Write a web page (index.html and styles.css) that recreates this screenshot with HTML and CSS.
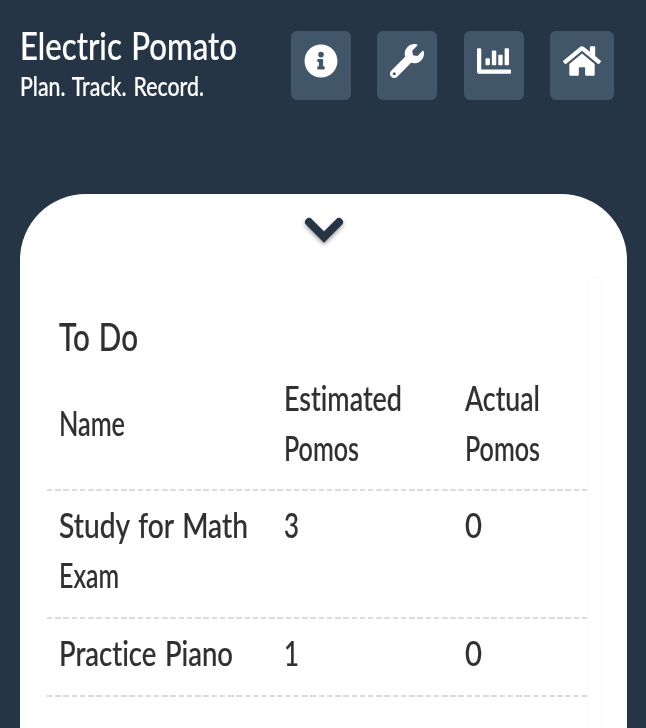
FILE: index.html
```html
<!DOCTYPE html>
<html lang="en">
<head>
<meta charset="utf-8">
<title>Electric Pomato</title>
<link rel="stylesheet" href="styles.css">
</head>
<body>
<header class="header">
  <div class="brand">
    <h1 class="title"><span class="fit" data-width="217">Electric Pomato</span></h1>
    <p class="tagline"><span class="fit" data-width="184">Plan. Track. Record.</span></p>
  </div>
  <nav class="nav">
    <button class="nav-button" aria-label="Information">
      <svg class="icon" width="34" height="34" viewBox="0 0 512 512"><path d="M256 8C119 8 8 119 8 256s111 248 248 248 248-111 248-248S393 8 256 8zm0 110a42 42 0 1 1 0 84 42 42 0 0 1 0-84zm56 254c0 6.600-5.400 12-12 12h-88c-6.600 0-12-5.400-12-12v-24c0-6.600 5.400-12 12-12h12v-64h-12c-6.600 0-12-5.400-12-12v-24c0-6.600 5.400-12 12-12h64c6.600 0 12 5.400 12 12v100h12c6.600 0 12 5.400 12 12v24z"/></svg>
    </button>
    <button class="nav-button" aria-label="Settings">
      <svg class="icon" width="34" height="34" viewBox="0 0 512 512"><path d="M508.700 110c-2.400-9.200-13.800-11.900-20.500-5.200L413.800 179.200l-67.900-11.300-11.300-67.900 74.400-74.400c6.700-6.700 3.900-18.100-5.300-20.500C355.500-7.300 302.200 5.500 264.400 43.300c-40.500 40.500-52.200 98.900-36.500 150.200L18.700 402.700c-25 25-25 65.500 0 90.500s65.500 25 90.500 0l209.100-209c51.200 15.900 109.500 4.400 150.400-36.500 37.900-37.900 50.500-91.200 40-137.700zM64 472a24 24 0 1 1 0-48 24 24 0 0 1 0 48z"/></svg>
    </button>
    <button class="nav-button" aria-label="Statistics">
      <svg class="icon" width="34" height="34" viewBox="0 0 512 512"><path d="M16 64h32c9 0 16 7 16 16v304h432c9 0 16 7 16 16v32c0 9-7 16-16 16H32c-18 0-32-14-32-32V80c0-9 7-16 16-16z"/><rect x="128" y="216" width="66" height="104" rx="14"/><rect x="224" y="96" width="66" height="224" rx="14"/><rect x="320" y="160" width="66" height="160" rx="14"/><rect x="416" y="64" width="66" height="256" rx="14"/></svg>
    </button>
    <button class="nav-button wide" aria-label="Home">
      <svg class="icon" width="38" height="34" viewBox="0 0 576 512"><path d="M280 148 96 300v164c0 9 7 16 16 16h112c9 0 16-7 16-16v-96c0-9 7-16 16-16h64c9 0 16 7 16 16v96c0 9 7 16 16 16h112c9 0 16-7 16-16V300L296 148c-5-4-11-4-16 0zM572 251l-84-69V44c0-7-5-12-12-12h-56c-7 0-12 5-12 12v72l-90-74c-18-14-43-14-61 0L4 251c-5 4-6 12-2 17l26 31c4 5 12 6 17 2L280 107c5-4 11-4 16 0l235 194c5 4 13 3 17-2l26-31c4-5 3-13-2-17z"/></svg>
    </button>
  </nav>
</header>
<main class="card">
  <button class="toggle" aria-label="Collapse">
    <svg class="chevron" width="40" height="26" viewBox="0 0 40 26"><path d="M5 5 20 20 35 5"/></svg>
  </button>
  <div class="panel">
    <section class="list">
      <h2 class="heading"><span class="fit" data-width="79">To Do</span></h2>
      <div class="row head">
        <div><span class="fit" data-width="66">Name</span></div>
        <div><span class="fit" data-width="118">Estimated</span><span class="fit" data-width="75">Pomos</span></div>
        <div><span class="fit" data-width="75">Actual</span><span class="fit" data-width="75">Pomos</span></div>
      </div>
      <div class="row">
        <div><span class="fit" data-width="189">Study for Math</span><span class="fit" data-width="60">Exam</span></div>
        <div><span class="fit" data-width="15">3</span></div>
        <div><span class="fit" data-width="17">0</span></div>
      </div>
      <div class="row">
        <div><span class="fit" data-width="174">Practice Piano</span></div>
        <div><span class="fit" data-width="15">1</span></div>
        <div><span class="fit" data-width="17">0</span></div>
      </div>
    </section>
    <div class="track"></div>
  </div>
</main>
<script src="fit.js"></script>
</body>
</html>
```
FILE: styles.css
```css
* { box-sizing: border-box; }
body {
  margin: 0;
  height: 728px;
  overflow: hidden;
  background: #263545;
  color: #303030;
  font-family: Lato, "Liberation Sans", sans-serif;
  font-variant-ligatures: none;
}
h1, h2, p { margin: 0; font-weight: 500; }
button { border: 0; padding: 0; font: inherit; }
.fit {
  display: block;
  width: max-content;
  word-spacing: 2px;
  transform-origin: left center;
  -webkit-text-stroke: .2px currentColor;
}
.header {
  display: flex;
  height: 194px;
  padding: 24px 32px 0 20px;
  color: #fff;
}
.brand { flex: 1; min-width: 0; }
.title { font-size: 39px; line-height: 42px; }
.tagline { font-size: 27px; line-height: 36px; margin-top: 2px; }
.nav { display: flex; flex: none; gap: 26.400px; padding-top: 7px; }
.nav-button {
  display: flex;
  justify-content: center;
  width: 60px;
  height: 69px;
  padding-top: 13px;
  border-radius: 6px;
  background: #415769;
}
.nav-button.wide { width: 64px; }
.icon { fill: #fff; flex: none; }
.card {
  width: 607px;
  height: 560px;
  margin-left: 20px;
  border-radius: 66px 66px 0 0;
  background: #fff;
}
.toggle {
  display: flex;
  justify-content: center;
  width: 100%;
  height: 83px;
  padding-top: 23px;
  background: none;
}
.chevron {
  fill: none;
  stroke: #263545;
  stroke-width: 8;
  stroke-linecap: round;
  filter: drop-shadow(0 2px 2px rgba(0, 0, 0, .4));
}
.panel { display: flex; height: 460px; padding-left: 27px; }
.list { width: 540px; padding-top: 34px; }
.heading {
  padding-left: 12px;
  font-size: 39px;
  line-height: 50px;
}
.row {
  display: grid;
  grid-template-columns: 225px 181px 134px;
  padding: 9px 0 19px;
  font-size: 34px;
  font-weight: 500;
  line-height: 50px;
  background: repeating-linear-gradient(90deg, #dcdcdc 0 5.500px, transparent 5.500px 8.230px) bottom / 100% 2px no-repeat;
}
.row > div { padding-left: 12px; }
.row.head { align-items: center; padding: 12px 0 18px; }
.track {
  width: 14px;
  margin-left: 1px;
  border: 1px solid #fafafa;
  border-radius: 3px 3px 0 0;
}
```
FILE: fit.js
```javascript
document.querySelectorAll('.fit').forEach(function (label) {
  var scale = Number(label.dataset.width) / label.getBoundingClientRect().width;
  label.style.transform = 'scaleX(' + scale + ')';
});
```
